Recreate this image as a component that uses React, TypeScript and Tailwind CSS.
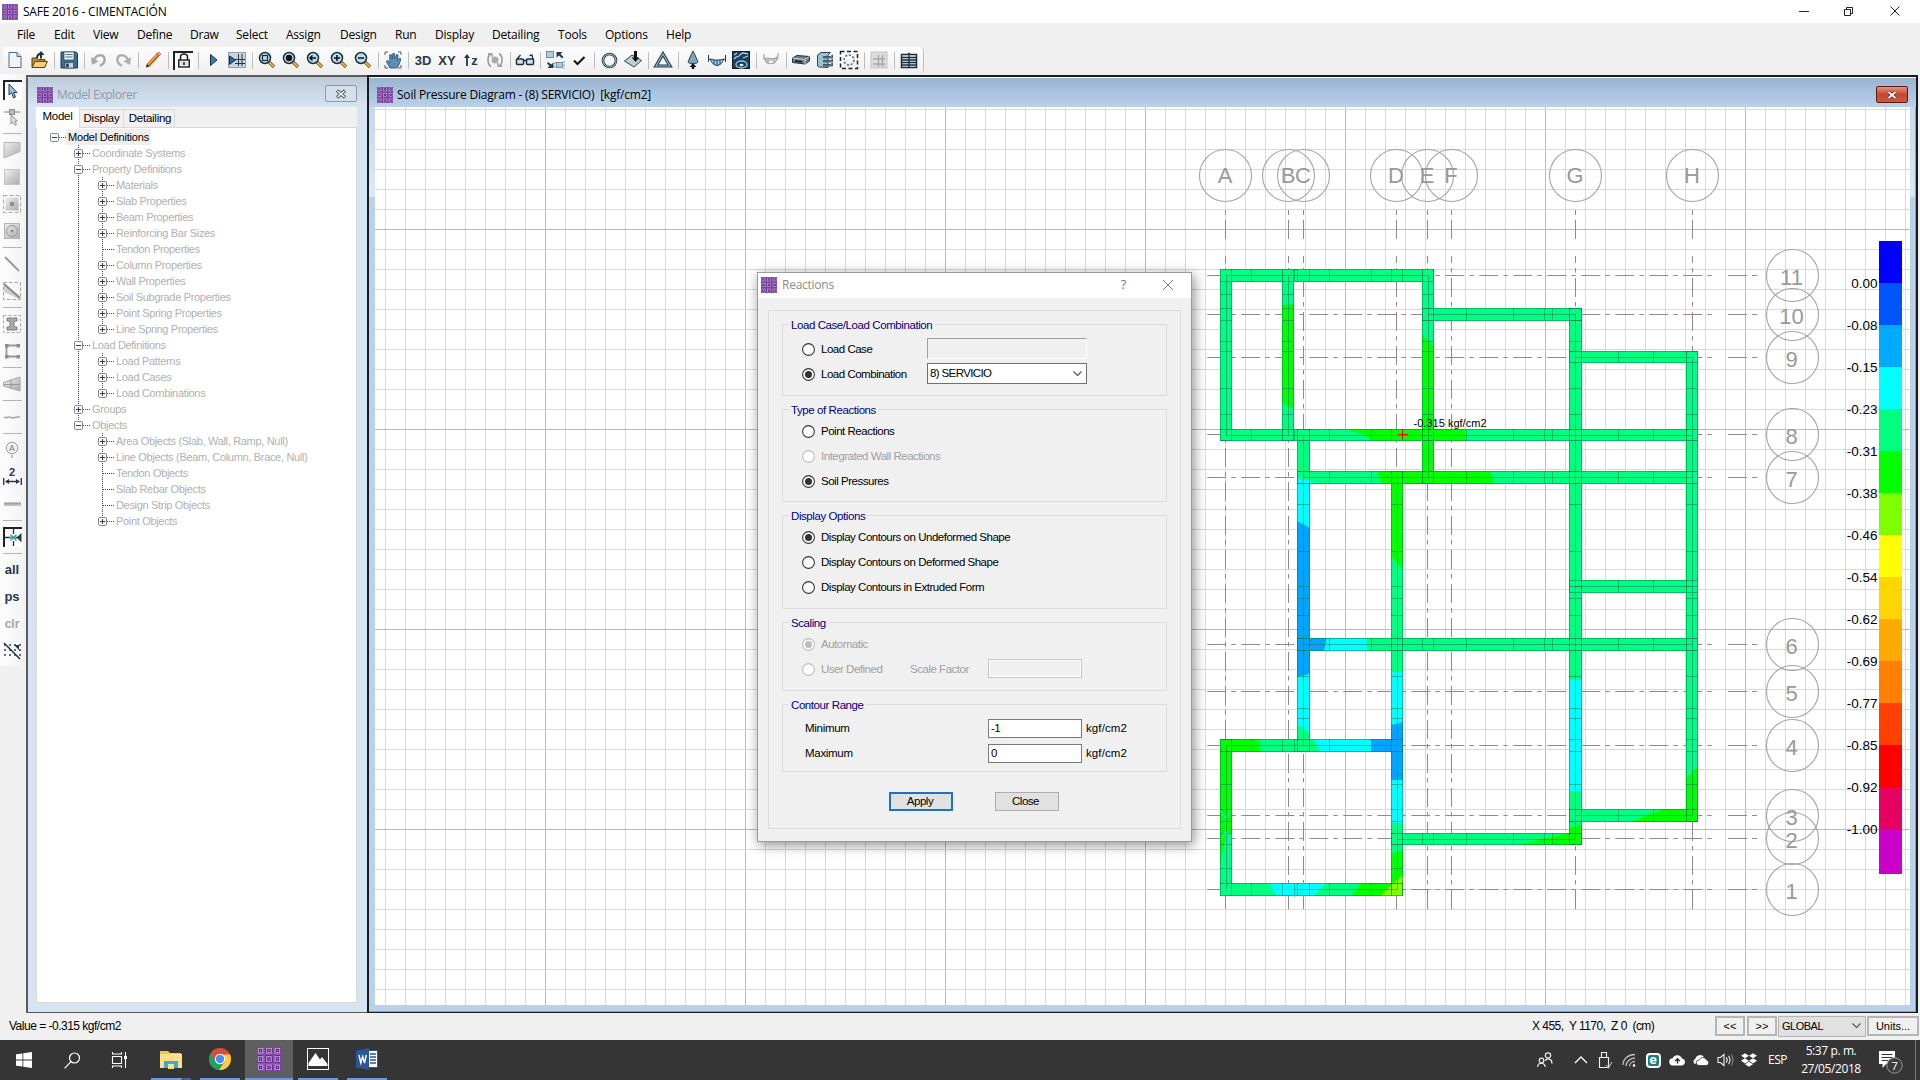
import React from "react";
import { FaDropbox } from "react-icons/fa";

const ARIAL = "font-['Liberation_Sans',Arial,sans-serif]";
const SEGOE = "font-['Open_Sans','Noto_Sans',sans-serif]";

type P = { children?: React.ReactNode };

/* ---------- shared icons ---------- */

function AppIcon({ size = 16 }: { size?: number }) {
  const cells = [0.6, 6.2, 11.8];
  return (
    <svg width={size} height={size} viewBox="0 0 16 16" className="shrink-0">
      <rect width="16" height="16" fill="#6b2c91" />
      <path d="M4.800 0v16M11.200 0v16M0 4.800h16M0 11.200h16" stroke="#8d50b3" strokeWidth="1.200" />
      {cells.map((x) =>
        cells.map((y) => (
          <g key={x + "-" + y}>
            <rect x={x + 0.3} y={y + 0.3} width="3" height="3" fill="#4c1a72" stroke="#c7a6da" strokeWidth="0.7" />
            <rect x={x + 1.3} y={y + 1.3} width="1" height="1" fill="#b48fcb" />
          </g>
        )),
      )}
    </svg>
  );
}

const S = ({ children }: P) => (
  <svg width="20" height="20" viewBox="0 0 20 20" fill="none" className="shrink-0">
    {children}
  </svg>
);

const Mag = ({ children }: P) => (
  <S>
    <path d="M11.500 11.500 L17 17" stroke="#8a5a12" strokeWidth="3.400" />
    <path d="M11.500 11.500 L16.600 16.600" stroke="#f0b040" strokeWidth="1.800" />
    <circle cx="8" cy="8" r="5.500" fill="#b5dcef" stroke="#1c2f3c" strokeWidth="1.500" />
    {children}
  </S>
);

const Word = ({ children }: P) => (
  <span className="font-['Liberation_Sans',Arial,sans-serif] text-[13px] leading-none font-bold text-[#26394a]">{children}</span>
);

/* ---------- main toolbar ---------- */

const NewDoc = () => (
  <S>
    <path d="M4 2.500h8l4 4v11H4z" fill="#eef4f7" stroke="#52697a" />
    <path d="M12 2.500v4h4" fill="#c9dbe4" stroke="#52697a" />
  </S>
);
const OpenDoc = () => (
  <S>
    <path d="M3 17V8h5l1.500 1.500H16V17z" fill="#c08a2b" stroke="#5e4210" />
    <path d="M3 17.500l3-6h12.500l-3 6z" fill="#f3cf78" stroke="#5e4210" />
    <path d="M8 8c0-3 1.500-4 4-4" stroke="#1d3447" strokeWidth="2" />
    <path d="M12 8.500V4" stroke="#1d3447" strokeWidth="2" />
    <path d="M8.500 5L12 1l3.500 4z" fill="#1d3447" />
  </S>
);
const Save = () => (
  <S>
    <path d="M2 2h15l1.500 1.500V18H2z" fill="#3d6d92" stroke="#1c3a52" />
    <rect x="5" y="2" width="10" height="8" fill="#e8eef2" stroke="#1c3a52" strokeWidth=".6" />
    <path d="M6.500 4.500h7M6.500 7h7" stroke="#54718a" />
    <rect x="6" y="12.500" width="8.500" height="5.500" fill="#c9d4dc" stroke="#1c3a52" strokeWidth=".6" />
    <rect x="7.200" y="13.500" width="2.500" height="4" fill="#1c3a52" />
  </S>
);
const Undo = () => (
  <S>
    <path d="M5 11C6 5 14 3 15.500 8.500c1 4-2 6-4.500 7.500" stroke="#a8a8a8" strokeWidth="2.400" />
    <path d="M2 7l1 8 6.500-3.500z" fill="#a8a8a8" />
  </S>
);
const Redo = () => (
  <svg width="20" height="20" viewBox="0 0 20 20" fill="none" className="-scale-x-100">
    <path d="M5 11C6 5 14 3 15.500 8.500c1 4-2 6-4.500 7.500" stroke="#b0b0b0" strokeWidth="2.400" />
    <path d="M2 7l1 8 6.500-3.500z" fill="#b0b0b0" />
  </svg>
);
const Pencil = () => (
  <S>
    <path d="M5 15.500L15.500 4" stroke="#a84f12" strokeWidth="3.600" />
    <path d="M5 15L14.500 4.500" stroke="#f7a93f" strokeWidth="1.800" />
    <path d="M14 3.500l2-1.500 2 2-1.800 1.800z" fill="#e8a8a0" stroke="#8a3a2a" strokeWidth=".5" />
    <path d="M3 17.500l.8-3.500 2.600 2.500z" fill="#2a1a0a" />
  </S>
);
const Lock = () => (
  <span className="flex h-[19px] w-5 items-center justify-center border-t-2 border-l-2 border-[#222] bg-white">
    <svg width="16" height="16" viewBox="0 0 16 16" fill="none">
      <path d="M4.500 7V4a3.500 3 0 0 1 7 0v3" stroke="#222" strokeWidth="1.600" />
      <rect x="2.700" y="7" width="10.600" height="7" fill="#dfe5e8" stroke="#222" strokeWidth="1.400" />
      <path d="M8 9v3" stroke="#222" strokeWidth="1.600" />
    </svg>
  </span>
);
const RunI = () => (
  <S>
    <path d="M7.500 4.500v11L14 10z" fill="#3a7ba8" stroke="#143049" />
  </S>
);
const RunGrid = () => (
  <S>
    <rect x="1.500" y="2.500" width="17" height="15" fill="#c9d3d9" stroke="#8fa0ab" />
    <path d="M11.500 4v12M15 4v12M8 9.500h10M8 13.500h10" stroke="#22394c" />
    <path d="M2.500 6v8.500L8.500 10z" fill="#2e6a98" stroke="#143049" />
  </S>
);
const Hand = () => (
  <S>
    <path d="M2 5V2h3M15 2h3v3M18 15v3h-3M5 18H2v-3" stroke="#555" />
    <path d="M7 18c-1-2-3.500-5-3.500-7l1.500-.5 2 2.500-.5-8 1.800-.3L9.300 9 9.800 3.500h1.700L12 9l1.500-4.500 1.600.5-.6 5.500 2-2.500 1.300.8C17 13 15.500 16 14 18z" fill="#5b8fb8" stroke="#2b4c68" strokeWidth=".8" />
  </S>
);
const ZUp = () => (
  <span className="flex items-center">
    <svg width="7" height="13" viewBox="0 0 7 13">
      <path d="M3 12V3" stroke="#26394a" strokeWidth="1.800" />
      <path d="M0 4l3-4 3 4z" fill="#26394a" />
    </svg>
    <Word>z</Word>
  </span>
);
const Rotate = () => (
  <S>
    <circle cx="10" cy="10" r="3.500" fill="#aaa" />
    <path d="M6 16.500C2 14 2 6 6 3.500M14 3.500c4 2.500 4 10.500 0 13" stroke="#999" strokeWidth="1.600" />
    <path d="M3 4h4v3M17 16h-4v-3" stroke="#999" strokeWidth="1.400" />
  </S>
);
const Glasses = () => (
  <S>
    <rect x="1.500" y="9" width="7" height="5.500" rx="1" fill="#cfe3ea" stroke="#1f2f3b" strokeWidth="1.500" />
    <rect x="11.500" y="9" width="7" height="5.500" rx="1" fill="#cfe3ea" stroke="#1f2f3b" strokeWidth="1.500" />
    <path d="M8.500 10.500h3M2 9l3.500-4M18 9l-1-4-2.500.5" stroke="#1f2f3b" strokeWidth="1.300" />
  </S>
);
const Swap = () => (
  <S>
    <rect x="1.500" y="1.500" width="7" height="6" fill="#a9cde4" stroke="#6f8ea5" />
    <rect x="11.500" y="12.500" width="6" height="5" fill="#a9cde4" stroke="#6f8ea5" />
    <path d="M11.500 2h6l-2 2 3 3-1.500 1.500-3-3-2.500 2zM8.500 18h-6l2-2L2 13.500 3.500 12l2.500 2.500 2.500-2z" fill="#22394c" />
    <path d="M10 12v7M19 11v8" stroke="#7a8a96" strokeDasharray="2 1.500" />
  </S>
);
const Check = () => (
  <S>
    <path d="M5 10.500l3.500 3.500L15.500 7" stroke="#111" strokeWidth="2" />
  </S>
);
const Ring = () => (
  <S>
    <circle cx="10.500" cy="10.500" r="6.500" stroke="#24394a" strokeWidth="2.600" />
    <circle cx="10.500" cy="10.500" r="6.500" stroke="#a9bcc8" strokeWidth="1" />
  </S>
);
const Load = () => (
  <S>
    <path d="M1.500 11L9 5l9.500 5.500L11 17z" fill="#b9cfdb" stroke="#2c4456" />
    <path d="M12.500 1v7" stroke="#111" strokeWidth="3" />
    <path d="M8.800 7.500h7.400L12.500 12z" fill="#111" />
  </S>
);
const Tri = () => (
  <S>
    <path d="M10 4L17 16H3z" stroke="#24394a" strokeWidth="3.200" />
    <path d="M10 4L17 16H3z" stroke="#8fb3c8" strokeWidth="1.200" />
  </S>
);
const Spring = () => (
  <S>
    <path d="M10 1l2 4 3 7c0 2-10 2-10 0l3-7z" fill="#7fa6b8" stroke="#2c4456" />
    <path d="M10 14v5" stroke="#111" strokeWidth="2.400" />
    <path d="M6.500 17l3.500-3.500 3.500 3.500z" fill="#111" />
  </S>
);
const Moment = () => (
  <S>
    <path d="M3.500 9c2 8.500 11 8.500 13 0-4 1.500-9 1.500-13 0z" fill="#a5d6ee" stroke="#1f3b50" />
    <path d="M1 8.500l3 1.500M19 8.500L16 10M1.500 5v7M18.500 5v7M7 10v4.500M10 10v5.500M13 10v4.500" stroke="#1f3b50" />
  </S>
);
const Contour = () => (
  <S>
    <rect x="1.500" y="1.500" width="17" height="17" fill="#1c3d5a" stroke="#10202f" />
    <path d="M3 9c3-4 4-1 6-4s4-2 8-1M3 5l3-2M12 8l5-2" stroke="#a9d0ea" strokeWidth="1.300" />
    <ellipse cx="10.500" cy="14.500" rx="5.500" ry="3.500" stroke="#8fc3e6" strokeWidth="1.500" />
    <ellipse cx="10.500" cy="15" rx="2" ry="1.300" fill="#e8f4fb" />
  </S>
);
const MomentGray = () => (
  <S>
    <path d="M3 7c2 9 11 9 14 0M3 4v5c4 2 10 2 14-3V3M7 8v6M13 8v5M3 8l14 1" stroke="#a5a5a5" strokeWidth="1.200" />
  </S>
);
const Beam = () => (
  <S>
    <path d="M1.500 8L6 5.500 18.500 6.500V11L14 14 1.500 12.500z" fill="#6f808b" stroke="#1f2d38" />
    <path d="M1.500 8L14 9.500l4.500-3M14 9.500V14" stroke="#c7d3da" />
    <path d="M4 11l7 .8" stroke="#111" strokeWidth="1.500" />
  </S>
);
const Stack = () => (
  <S>
    <path d="M2.500 5L6 2.500h9.500L13 5v12.500l-9-.5-1.500-1z" fill="#9cc0d2" stroke="#2c4456" />
    <path d="M8.500 6.500h7l2-1.500v3h-9zM8.500 10.500h7l2-1.500v3h-9zM8.500 14.500h7l2-1.500v3h-9z" fill="#6c8fa3" stroke="#2c4456" strokeWidth=".8" />
  </S>
);
const DashBox = () => (
  <S>
    <rect x="1.500" y="1.500" width="17" height="17" stroke="#222" strokeWidth="1.500" strokeDasharray="4 2.500" />
    <circle cx="10" cy="10" r="5" stroke="#4e7892" strokeWidth="1.600" strokeDasharray="2.200 1.600" />
  </S>
);
const GridGray = () => (
  <S>
    <rect x="2" y="2" width="16" height="16" fill="#dcdcdc" stroke="#c4c4c4" />
    <path d="M4 9h12M4 14h12M9.500 5v12M13.500 5v12" stroke="#a9a9a9" strokeWidth="1.500" />
  </S>
);
const Table = () => (
  <S>
    <path d="M2.500 4.500h6l1.500-1 1.500 1h6v13h-15z" fill="#e6ecef" stroke="#1c2f3c" strokeWidth="1.500" />
    <path d="M10 4v13M3 7.500h14M3 10h14M3 12.500h14M3 15h14" stroke="#1c2f3c" strokeWidth="1.400" />
  </S>
);

const TOOLS: (React.ReactNode | "|")[] = [
  <NewDoc />, <OpenDoc />, "|", <Save />, "|", <Undo />, <Redo />, "|", <Pencil />, "|", <Lock />, "|", <RunI />, <RunGrid />, "|",
  <Mag><rect x="5.500" y="5.500" width="5" height="5" stroke="#1c2f3c" strokeWidth="1.200" /></Mag>,
  <Mag><circle cx="8" cy="8" r="3.200" fill="#111" /></Mag>,
  <Mag><path d="M5 8h6M7.500 5.500L5 8l2.500 2.500" stroke="#111" strokeWidth="1.500" /></Mag>,
  <Mag><path d="M5 8h6M8 5v6" stroke="#111" strokeWidth="1.500" /></Mag>,
  <Mag><path d="M5 8h6" stroke="#111" strokeWidth="1.500" /></Mag>,
  "|", <Hand />, "|", <Word>3D</Word>, <Word>XY</Word>, <ZUp />, <Rotate />, "|", <Glasses />, "|", <Swap />, <Check />, "|",
  <Ring />, <Load />, "|", <Tri />, "|", <Spring />, <Moment />, <Contour />, "|", <MomentGray />, "|",
  <Beam />, <Stack />, <DashBox />, "|", <GridGray />, "|", <Table />,
];

function Toolbar() {
  return (
    <div className="flex h-[27px] bg-[#f0f0f0] pl-[3px]">
      <div className="flex h-[27px] w-[921px] items-center rounded-r border-r border-[#c2c2c2] bg-linear-to-b from-[#fdfdfd] to-[#efefef] pb-px">
        {TOOLS.map((t, i) =>
          t === "|" ? (
            <span key={i} className="flex w-[6px] justify-center">
              <span className="h-[17px] w-px bg-[#bdbdbd]" />
            </span>
          ) : (
            <span key={i} className="flex w-6 items-center justify-center">{t}</span>
          ),
        )}
      </div>
    </div>
  );
}

/* ---------- left tool strip ---------- */

const Pressed = ({ children }: P) => (
  <span className="flex h-5 w-[19px] items-center justify-center border-t-2 border-l-2 border-[#222] bg-white">{children}</span>
);

const SIDE: (React.ReactNode | "|")[] = [
  <Pressed>
    <svg width="12" height="16" viewBox="0 0 12 16"><path d="M2 1v11l2.600-2.300L6.500 15l2-1-2-4.500H10z" fill="#8fc7e0" stroke="#22394c" /></svg>
  </Pressed>,
  <S><path d="M2 5h16" stroke="#999" strokeWidth="1.300" /><rect x="7.500" y="2.500" width="5" height="5" fill="#bbb" stroke="#8a8a8a" /><path d="M9 8v9l2-2 2 3.500 1.500-1-1.500-3.500h2.500z" fill="#ddd" stroke="#9a9a9a" /></S>,
  "|",
  <S><path d="M2 2.500h16v9L2 18z" fill="url(#sg)" stroke="#b5b5b5" /></S>,
  <S><rect x="2.500" y="2.500" width="15" height="15" fill="url(#sg)" stroke="#c4c4c4" /></S>,
  <S><rect x="1.500" y="1.500" width="17" height="17" stroke="#aaa" strokeDasharray="4 2" /><rect x="3.500" y="3.500" width="13" height="13" fill="url(#sg)" /><circle cx="10" cy="10" r="2.200" fill="#8a8a8a" /></S>,
  <S><rect x="2.500" y="2.500" width="15" height="15" fill="url(#sg)" stroke="#b4b4b4" /><circle cx="10" cy="10" r="5.500" stroke="#999" /><circle cx="10" cy="10" r="1.500" fill="#8a8a8a" /></S>,
  "|",
  <S><path d="M3 3l14 14" stroke="#9b9b9b" strokeWidth="2" /></S>,
  <S><rect x="1.500" y="1.500" width="17" height="17" stroke="#a5a5a5" strokeDasharray="3.500 2" /><path d="M2 4v7l15 7 1-2z" fill="#d0d0d0" /><path d="M2 3l16 14" stroke="#8a8a8a" strokeWidth="2" /></S>,
  "|",
  <S><rect x="1.500" y="1.500" width="17" height="17" stroke="#a5a5a5" strokeDasharray="3 2" /><path d="M5 4h10v3h-2l-1 1v4l1 1h2v3H5v-3h2l1-1V8L7 7H5z" fill="#aaa" stroke="#7f7f7f" /></S>,
  <S><path d="M17 4.500H4.500v11H17" stroke="#999" strokeWidth="1.800" /><path d="M3 3h3.500v3.500H3zM14.500 3H18v3.500h-3.500zM3 14h3.500v3.500H3zM14.500 14H18v3.500h-3.500z" fill="#8c8c8c" /></S>,
  "|",
  <S><path d="M1.500 8.500L18 3v14L1.500 12z" fill="url(#sg)" stroke="#a5a5a5" /><path d="M2 10.500h16M9 6v9" stroke="#999" /></S>,
  "|",
  <S><path d="M2 10.500h3c3-2 4 1 6 .5s3-1.500 7-1" stroke="#a5a5a5" strokeWidth="1.500" /></S>,
  "|",
  <S><circle cx="10" cy="8" r="5.800" fill="#f0f0f0" stroke="#9a9a9a" /><path d="M7.500 11L10 5l2.500 6M8.300 9.300h3.400M10 15v3" stroke="#8a8a8a" /></S>,
  <span className="flex flex-col items-center">
    <span className="font-['Liberation_Sans',Arial,sans-serif] text-[11px] leading-[9px] font-bold text-[#26394a]">2</span>
    <svg width="19" height="9" viewBox="0 0 19 9"><path d="M.7 1v7M18.300 1v7M3 4.500h13" stroke="#26394a" strokeWidth="1.400" /><path d="M2 4.500L6 2v5zM17 4.500L13 2v5z" fill="#26394a" /></svg>
  </span>,
  <S><path d="M2 10h17" stroke="#b5b5b5" strokeWidth="3.500" /><path d="M2 9.500h17" stroke="#999" strokeDasharray="2 1" /></S>,
  "|",
  <Pressed>
    <svg width="17" height="17" viewBox="0 0 17 17"><path d="M0 8.500h12M8.500 0v5M8.500 12v5" stroke="#1f2f3b" strokeWidth="1.300" /><path d="M5.500 5.500l6 6M11.500 5.500l-6 6M4 8.500h7" stroke="#3aa7a0" strokeWidth="1.500" /><path d="M16.500 4v9.500L11.500 8.500z" fill="#26394a" /></svg>
  </Pressed>,
  "|",
  <Word>all</Word>,
  <Word>ps</Word>,
  <span className="font-['Liberation_Sans',Arial,sans-serif] text-[12px] font-bold text-[#a5a5a5]">clr</span>,
  <S><path d="M3 3v15M8 3v15M13 3v15M18 3v15" stroke="#3a4d5c" strokeWidth="1.600" strokeDasharray="2 3" /><path d="M2 2l16 16" stroke="#22394c" strokeWidth="1.600" /><path d="M12 4h5v5z" fill="#22394c" /></S>,
];

function SideTools() {
  return (
    <div className="flex w-[26px] shrink-0 flex-col bg-[#f0f0f0]">
      <div className="flex h-[592px] w-[24px] flex-col rounded-b bg-linear-to-r from-[#fdfdfd] to-[#f3f3f3] pt-[2px]">
        <svg width="0" height="0" className="absolute">
          <defs>
            <linearGradient id="sg" x1="0" y1="0" x2="1" y2="1">
              <stop offset="0" stopColor="#f0f0f0" />
              <stop offset="1" stopColor="#ababab" />
            </linearGradient>
          </defs>
        </svg>
        {SIDE.map((t, i) =>
          t === "|" ? (
            <span key={i} className="flex h-[6px] items-center justify-center">
              <span className="h-px w-[19px] bg-[#b5b5b5]" />
            </span>
          ) : (
            <span key={i} className="flex h-[27px] items-center justify-center">{t}</span>
          ),
        )}
      </div>
    </div>
  );
}

/* ---------- model explorer ---------- */

type Node = [level: number, mark: "+" | "-" | "", label: string];
const TREE: Node[] = [
  [0, "-", "Model Definitions"],
  [1, "+", "Coordinate Systems"],
  [1, "-", "Property Definitions"],
  [2, "+", "Materials"],
  [2, "+", "Slab Properties"],
  [2, "+", "Beam Properties"],
  [2, "+", "Reinforcing Bar Sizes"],
  [2, "", "Tendon Properties"],
  [2, "+", "Column Properties"],
  [2, "+", "Wall Properties"],
  [2, "+", "Soil Subgrade Properties"],
  [2, "+", "Point Spring Properties"],
  [2, "+", "Line Spring Properties"],
  [1, "-", "Load Definitions"],
  [2, "+", "Load Patterns"],
  [2, "+", "Load Cases"],
  [2, "+", "Load Combinations"],
  [1, "+", "Groups"],
  [1, "-", "Objects"],
  [2, "+", "Area Objects (Slab, Wall, Ramp, Null)"],
  [2, "+", "Line Objects (Beam, Column, Brace, Null)"],
  [2, "", "Tendon Objects"],
  [2, "", "Slab Rebar Objects"],
  [2, "", "Design Strip Objects"],
  [2, "+", "Point Objects"],
];
const LAST_L1 = 18;

function Branch({ mark, up, down }: { mark: string; up: boolean; down: boolean }) {
  return (
    <svg width="24" height="16" viewBox="0 0 24 16" className="shrink-0">
      {up && <path d="M12.500 0v8" stroke="#444" strokeDasharray="1 1" />}
      {down && <path d="M12.500 8v8" stroke="#444" strokeDasharray="1 1" />}
      <path d="M13 8.500h11" stroke="#444" strokeDasharray="1 1" />
      {mark && (
        <>
          <rect x="8.500" y="4.500" width="8" height="8" rx="1" fill="#f7f7f7" stroke="#848a94" />
          <path d={mark === "+" ? "M10 8.500h5M12.500 6v5" : "M10 8.500h5"} stroke="#2b3c78" />
        </>
      )}
    </svg>
  );
}

function Tree() {
  return (
    <div className="flex-1 border border-[#d9d9d9] bg-white pt-px pl-[5px]">
      {TREE.map(([level, mark, label], i) => {
        const next = TREE[i + 1];
        return (
          <div key={i} className="flex h-4 items-center">
            {level === 1 && <span className="w-6" />}
            {level === 2 && <span className="w-6" />}
            {level === 2 &&
              (i < LAST_L1 ? (
                <svg width="24" height="16" viewBox="0 0 24 16"><path d="M12.500 0v16" stroke="#444" strokeDasharray="1 1" /></svg>
              ) : (
                <span className="w-6" />
              ))}
            <Branch mark={mark} up={level > 0} down={level === 1 ? i < LAST_L1 : level === 2 && !!next && next[0] === 2} />
            <span
              className={
                level === 0
                  ? "h-4 bg-[#efefef] px-[2px] text-[11px] leading-4 tracking-[-0.200px] whitespace-nowrap text-black"
                  : "px-[2px] text-[11px] leading-4 tracking-[-0.320px] whitespace-nowrap text-[#b0b0b0]"
              }
            >
              {label}
            </span>
          </div>
        );
      })}
    </div>
  );
}

function Explorer() {
  return (
    <div className="flex w-[341px] shrink-0 flex-col border-t-2 border-b border-l-2 border-[#5a5a5a] bg-[#d7e4f2]">
      <div className="flex h-[30px] items-center rounded-tl bg-linear-to-b from-[#bccbdb] to-[#d7e4f2] pr-[10px] pl-[9px]">
        <span className="flex flex-1 items-center pt-[5px]">
          <AppIcon />
          <span className="ml-[4px] font-['Open_Sans','Noto_Sans',sans-serif] text-[12px] tracking-[-0.380px] text-[#8e99a5]">Model Explorer</span>
        </span>
        <span className="mt-[3px] flex h-[17px] w-8 items-center justify-center rounded-[2px] border border-[#8c9aa8] bg-[#d3dfeb]">
          <svg width="12" height="10" viewBox="0 0 12 10"><path d="M2 1.500l8 7M10 1.500l-8 7" stroke="#4a5561" strokeWidth="3.400" /><path d="M2.500 2l7 6M9.500 2l-7 6" stroke="#fff" strokeWidth="1.500" /></svg>
        </span>
      </div>
      <div className={"mr-[10px] mb-[9px] ml-[8px] flex flex-1 flex-col " + ARIAL}>
        <div className="flex h-[20px] items-end bg-[#f0f0f0] text-[11.500px] tracking-[-0.250px] text-black">
          <span className="flex h-[21px] w-[44px] translate-y-px items-center justify-center border-r border-[#d9d9d9] bg-white pb-[2px]">Model</span>
          <span className="flex h-[18px] w-[44px] items-center justify-center border-t border-r border-[#d9d9d9] pt-px">Display</span>
          <span className="flex h-[18px] w-[51px] items-center justify-center border-t border-r border-[#d9d9d9] pt-px pl-[2px]">Detailing</span>
        </div>
        <Tree />
      </div>
    </div>
  );
}

/* ---------- soil pressure plan ---------- */

const SPRING = "#00ff80";
const GREEN = "#00ff00";
const CYAN = "#00ffff";
const BLUE = "#00a5ff";

const COLS: [string, number][] = [["A", 1225.5], ["B", 1288.5], ["C", 1303.5], ["D", 1396.5], ["E", 1427.5], ["F", 1451.5], ["G", 1575.5], ["H", 1692.5]];
const ROWS: [string, number][] = [["11", 275.5], ["10", 314.5], ["9", 357.5], ["8", 434.5], ["7", 477.5], ["6", 644.5], ["5", 691.5], ["4", 745.5], ["3", 815.5], ["2", 838.5], ["1", 889.5]];

/* x1, y1, x2, y2 */
const V_BEAMS = [
  [1220, 269, 1232, 441], [1282, 269, 1294, 441], [1422, 269, 1434, 484], [1569, 308, 1582, 845], [1686, 351, 1698, 822],
  [1297, 429, 1310, 752], [1391, 471, 1403, 896], [1220, 739, 1232, 896],
];
const H_BEAMS = [
  [1220, 269, 1434, 282], [1422, 308, 1582, 321], [1569, 351, 1698, 363], [1220, 429, 1698, 441], [1297, 471, 1698, 484],
  [1569, 580, 1698, 593], [1297, 638, 1698, 651], [1220, 739, 1403, 752], [1220, 883, 1403, 896], [1391, 833, 1582, 845], [1569, 809, 1698, 822],
];
const PATCHES: [string, string][] = [
  [GREEN, "1282,305 1294,304 1294,409 1282,403"],
  [GREEN, "1422,335 1434,346 1434,484 1422,484"],
  [GREEN, "1345,429 1464,429 1466,436 1466,441 1374,441 1363,434"],
  [GREEN, "1377,471 1490,471 1494,484 1382,484"],
  [CYAN, "1297,478 1310,480 1310,528 1297,521"],
  [CYAN, "1309,480 1315,484 1309,484"],
  [BLUE, "1297,521 1310,528 1310,674 1297,677"],
  [CYAN, "1297,677 1310,674 1310,733 1297,725"],
  [BLUE, "1309,638 1327,638 1324,651 1309,651"],
  [CYAN, "1327,638 1366,638 1368,651 1324,651"],
  [GREEN, "1391,484 1403,484 1403,569 1391,556"],
  [CYAN, "1391,672 1403,672 1403,722 1391,725"],
  [GREEN, "1220,739 1258,739 1261,752 1220,752"],
  [CYAN, "1314,739 1371,739 1371,752 1320,752"],
  [BLUE, "1371,739 1391,739 1391,725 1403,722 1403,780 1391,780 1391,752 1371,752"],
  [CYAN, "1391,780 1403,780 1403,823 1391,823"],
  [GREEN, "1391,854 1403,850 1403,896 1391,896"],
  [GREEN, "1220,752 1232,752 1232,832 1226,836 1220,864"],
  [CYAN, "1269,883 1326,883 1313,896 1276,896"],
  [GREEN, "1361,883 1403,883 1403,896 1352,896"],
  ["#80ff00", "1403,875 1403,896 1381,896 1389,886"],
  [CYAN, "1569,679 1582,679 1582,791 1569,791"],
  [GREEN, "1569,828 1582,825 1582,845 1517,845 1569,833"],
  [GREEN, "1686,779 1698,766 1698,822 1631,822 1662,809 1686,809"],
];
const XT = [1251.5, 1282.5, 1294.5, 1297.5, 1309.5, 1329.5, 1371.5, 1391.5, 1402.5, 1422.5, 1433.5, 1466.5, 1513.5, 1544.5, 1552.5, 1569.5, 1581.5, 1618.5, 1653.5, 1686.5];
const YT = [294.5, 308.5, 320.5, 341.5, 351.5, 388.5, 414.5, 429.5, 440.5, 471.5, 483.5, 504.5, 551.5, 586.5, 598.5, 615.5, 638.5, 650.5, 676.5, 708.5, 718.5, 739.5, 751.5, 784.5, 809.5, 821.5, 833.5, 844.5, 868.5, 883.5];

const LEGEND: [string, string][] = [
  ["#0000ff", "0.00"], ["#0055ff", "-0.08"], ["#00aaff", "-0.15"], ["#00ffff", "-0.23"], ["#00ff80", "-0.31"], ["#00ff00", "-0.38"],
  ["#80ff00", "-0.46"], ["#ffff00", "-0.54"], ["#ffd500", "-0.62"], ["#ffaa00", "-0.69"], ["#ff8000", "-0.77"], ["#ff4000", "-0.85"],
  ["#ff0000", "-0.92"], ["#e6005f", "-1.00"], ["#c800c8", ""],
];

const range = (from: number, to: number, step: number) => {
  const out: number[] = [];
  for (let v = from; v <= to; v += step) out.push(v);
  return out;
};

function GridLines() {
  return (
    <g stroke="#8f8a88" fill="none">
      {COLS.map(([n, x]) => (
        <g key={n}>
          <path d={`M${x} 210v5M${x} 220v19`} />
          <path d={`M${x} 256V909`} strokeDasharray="19 5 4.500 5.500" strokeDashoffset="12" />
        </g>
      ))}
      {ROWS.map(([n, y]) => (
        <g key={n}>
          <path d={`M1206.500 ${y}H1712`} strokeDasharray="19 5 4.500 5.500" strokeDashoffset="33.200" />
          <path d={`M1728 ${y}h19M1752 ${y}h5`} />
        </g>
      ))}
    </g>
  );
}

function Plan() {
  return (
    <svg width="1535" height="898" viewBox="375 107 1535 898" className="block bg-white" fontFamily="Liberation Sans, Arial, sans-serif">
      {range(385, 1905, 20).map((x) => (
        <path key={x} d={`M${x + 0.5} 107V1005`} stroke={(x - 345) % 200 === 0 ? "#93c3e8" : "#c6def2"} />
      ))}
      {range(109, 989, 20).map((y) => (
        <path key={y} d={`M375 ${y + 0.5}H1910`} stroke={(y - 229) % 200 === 0 ? "#93c3e8" : "#c6def2"} />
      ))}
      <GridLines />
      <g fill={SPRING}>
        {[...V_BEAMS, ...H_BEAMS].map(([a, b, c, d], i) => (
          <rect key={i} x={a} y={b} width={c - a} height={d - b} />
        ))}
      </g>
      {PATCHES.map(([c, p], i) => (
        <polygon key={i} points={p} fill={c} />
      ))}
      <g stroke="#007a4a" strokeOpacity="0.5" fill="none">
        {V_BEAMS.map(([a, b, c, d], i) => (
          <g key={i}>
            <path d={`M${a + 0.5} ${b}V${d}M${c - 0.5} ${b}V${d}`} />
            {YT.filter((y) => y > b && y < d).map((y) => (
              <path key={y} d={`M${a} ${y}H${c}`} />
            ))}
          </g>
        ))}
        {H_BEAMS.map(([a, b, c, d], i) => (
          <g key={i}>
            <path d={`M${a} ${b + 0.5}H${c}M${a} ${d - 0.5}H${c}`} />
            {XT.filter((x) => x > a && x < c).map((x) => (
              <path key={x} d={`M${x} ${b}V${d}`} />
            ))}
          </g>
        ))}
      </g>
      <g stroke="#2f7070" strokeOpacity="0.55">
        {V_BEAMS.map(([a, b, , d], i) => (
          <path key={i} d={`M${a + 6.5} ${b + 6}V${d - 6}`} />
        ))}
        {H_BEAMS.map(([a, b, c], i) => (
          <path key={i} d={`M${a + 6} ${b + 6.5}H${c - 6}`} />
        ))}
      </g>
      <g stroke="#00f0e0" fill="none">
        <path d="M1225.500 889V832M1221 840l4.500-9 4.500 9M1220 811l5.500 7 5.500-7M1225.500 818v6M1226 889.500h68M1294 897l10-14M1294 884l10 13" />
      </g>
      <g fill="none" stroke="#a3a3a3" strokeWidth="1.100">
        {COLS.map(([n, x]) => <circle key={n} cx={x} cy="175.500" r="26" />)}
        {ROWS.map(([n, y]) => <circle key={n} cx="1792.500" cy={y} r="26" />)}
      </g>
      <g fill="#999" fontSize="22" textAnchor="middle">
        {COLS.map(([n, x]) => <text key={n} x={x - 0.5} y="183">{n}</text>)}
        {ROWS.map(([n, y]) => <text key={n} x="1791.500" y={y + 9}>{n}</text>)}
      </g>
      <text x="1413.500" y="427" fontSize="11" textLength="73">-0.315 kgf/cm2</text>
      <path d="M1398 434.500h10M1402.500 429v11" stroke="#f00" />
      {LEGEND.map(([c, t], i) => (
        <g key={c}>
          <rect x="1879" y={241 + 42 * i} width="23" height={i === 14 ? 45 : 42} fill={c} />
          {t && <text x="1877.500" y={288 + 42 * i} fontSize="13.500" textAnchor="end">{t}</text>}
        </g>
      ))}
    </svg>
  );
}

function PlanWindow() {
  return (
    <div className="flex w-[1551px] shrink-0 flex-col border-2 border-b-[1px] border-[#1a1a1a] bg-[#b9d1ea]">
      <div className="flex h-[30px] items-center border-t border-white bg-linear-to-b from-[#9ab4d1] to-[#b9d1ea] pr-[8px] pl-[8px]">
        <span className="flex flex-1 items-center pt-[5px]">
          <AppIcon />
          <span className="ml-[4px] font-['Open_Sans','Noto_Sans',sans-serif] text-[12px] tracking-[-0.210px] whitespace-pre text-black">{"Soil Pressure Diagram - (8) SERVICIO)  [kgf/cm2]"}</span>
        </span>
        <span className="mt-[4px] flex h-[17px] w-8 items-center justify-center rounded-[2px] border border-[#5c1a12] bg-linear-to-b from-[#e0937f] via-[#c9452b] to-[#c75a3f]">
          <svg width="12" height="10" viewBox="0 0 12 10"><path d="M2.500 2l7 6M9.500 2l-7 6" stroke="#5a2018" strokeWidth="3.200" /><path d="M2.500 2l7 6M9.500 2l-7 6" stroke="#fff" strokeWidth="1.800" /></svg>
        </span>
      </div>
      <div className="flex flex-1 border-b border-[#35c3e0] bg-[#b9d1ea]">
        <div className="w-[6px] bg-linear-to-b from-[#c4d8ee] from-0% via-[#dbe8f6] via-10% to-[#b9d1ea] to-[10%]" />
        <Plan />
        <div className="w-[6px] border-r border-[#35c3e0] bg-linear-to-b from-[#c4d8ee] from-0% via-[#dbe8f6] via-10% to-[#b9d1ea] to-[10%]" />
      </div>
    </div>
  );
}

/* ---------- reactions dialog ---------- */

function Radio({ label, on, off }: { label: string; on?: boolean; off?: boolean }) {
  return (
    <span className={off ? "flex h-[25px] items-center text-[#a0a0a0]" : "flex h-[25px] items-center text-black"}>
      <svg width="13" height="13" viewBox="0 0 13 13" className="mr-[6px] shrink-0">
        <circle cx="6.500" cy="6.500" r="5.900" fill="#fff" stroke={off ? "#bcbcbc" : "#333"} strokeWidth="1.100" />
        {on && <circle cx="6.500" cy="6.500" r="3.500" fill={off ? "#bcbcbc" : "#333"} />}
      </svg>
      <span className="pt-px">{label}</span>
    </span>
  );
}

function Group({ title, className, children }: P & { title: string; className: string }) {
  return (
    <fieldset className={"relative flex flex-col border border-[#dcdcdc] pl-[19px] " + className}>
      <span className="absolute -top-[7px] left-[6px] bg-[#f0f0f0] px-[2px] leading-[15px] tracking-[-0.420px] text-[#00007f]">{title}</span>
      {children}
    </fieldset>
  );
}

function Dialog() {
  return (
    <div className={"absolute top-[272px] left-[757px] flex h-[570px] w-[435px] flex-col border border-[#9a9a9a] bg-[#f0f0f0] text-[11.500px] tracking-[-0.480px] whitespace-nowrap text-black shadow-[2px_3px_12px_rgba(0,0,0,0.45)] " + ARIAL}>
      <div className="flex h-[25px] items-center bg-white pr-[17px] pb-px pl-[3px]">
        <AppIcon />
        <span className="ml-[5px] flex-1 font-['Open_Sans','Noto_Sans',sans-serif] text-[12px] tracking-[-0.250px] text-[#8d8d8d]">Reactions</span>
        <span className="mr-[36px] font-['Open_Sans','Noto_Sans',sans-serif] text-[13px] text-[#777]">?</span>
        <svg width="12" height="12" viewBox="0 0 12 12"><path d="M1 1l10 10M11 1L1 11" stroke="#777" /></svg>
      </div>
      <div className="mx-[10px] mt-[12px] mb-[12px] flex flex-1 flex-col border border-[#dcdcdc] px-[13px] pt-[13px]">
        <Group title="Load Case/Load Combination" className="h-[72px] pt-[12px]">
          <div className="flex">
            <div className="flex w-[125px] flex-col">
              <Radio label="Load Case" />
              <Radio label="Load Combination" on />
            </div>
            <div className="flex flex-col pt-[1px]">
              <span className="h-[21px] w-[160px] border border-t-[#a0a0a0] border-r-white border-b-white border-l-[#a0a0a0]" />
              <span className="mt-[4px] flex h-[21px] w-[160px] items-center justify-between border border-[#707070] bg-white pr-[4px] pl-[2px] tracking-[-0.620px]">
                8) SERVICIO
                <svg width="9" height="6" viewBox="0 0 9 6"><path d="M.5.500l4 4 4-4" fill="none" stroke="#555" strokeWidth="1.200" /></svg>
              </span>
            </div>
          </div>
        </Group>
        <Group title="Type of Reactions" className="mt-[13px] h-[93px] pt-[9px]">
          <Radio label="Point Reactions" />
          <Radio label="Integrated Wall Reactions" off />
          <Radio label="Soil Pressures" on />
        </Group>
        <Group title="Display Options" className="mt-[13px] h-[94px] pt-[9px]">
          <Radio label="Display Contours on Undeformed Shape" on />
          <Radio label="Display Contours on Deformed Shape" />
          <Radio label="Display Contours in Extruded Form" />
        </Group>
        <Group title="Scaling" className="mt-[13px] h-[69px] pt-[9px]">
          <Radio label="Automatic" on off />
          <div className="flex items-center text-[#a0a0a0]">
            <div className="w-[108px]"><Radio label="User Defined" off /></div>
            <span className="w-[78px] pt-px">Scale Factor</span>
            <span className="-mt-[3px] h-[19px] w-[94px] border border-[#c6c6c6] bg-[#f0f0f0] shadow-[inset_0_0_0_1px_#fff]" />
          </div>
        </Group>
        <Group title="Contour Range" className="mt-[13px] h-[68px] pt-[11px]">
          {[["Minimum", "-1"], ["Maximum", "0"]].map(([k, v]) => (
            <div key={k} className="flex h-[25px] items-center">
              <span className="w-[186px] pl-[3px] tracking-[-0.300px]">{k}</span>
              <span className="mr-[4px] flex h-[19px] w-[94px] items-center border border-[#7a7a7a] bg-white pl-[2px]">{v}</span>
              <span className="tracking-[0.100px]">kgf/cm2</span>
            </div>
          ))}
        </Group>
        <div className="mt-[20px] flex gap-[42px] pl-[107px]">
          <span className="flex h-[19px] w-[64px] items-center justify-center border-2 border-[#1b74bd] bg-[#e1e1e1] pr-[2px]">Apply</span>
          <span className="flex h-[19px] w-[64px] items-center justify-center border border-[#adadad] bg-[#e1e1e1] pr-[3px]">Close</span>
        </div>
      </div>
    </div>
  );
}

/* ---------- bottom bars ---------- */

function StatusBar() {
  return (
    <div className={"flex h-[27px] items-center bg-[#f0f0f0] pr-[1px] pb-px pl-[9px] text-[12px] whitespace-pre text-black " + ARIAL}>
      <span className="w-[1523px] tracking-[-0.500px]">Value = -0.315 kgf/cm2</span>
      <span className="w-[183px] tracking-[-0.530px]">{"X 455,  Y 1170,  Z 0  (cm)"}</span>
      <span className="mr-[2px] flex h-5 w-[30px] items-center justify-center border-2 border-[#b5b5b5] bg-[#f0f0f0] text-[11px]">&lt;&lt;</span>
      <span className="mr-px flex h-5 w-[30px] items-center justify-center border-2 border-[#b5b5b5] bg-[#f0f0f0] text-[11px]">&gt;&gt;</span>
      <span className="mr-px flex h-[21px] w-[88px] items-center justify-between border border-[#b5b5b5] bg-[#e1e1e1] pr-[4px] pl-[3px] text-[11px] tracking-[-0.500px]">
        GLOBAL
        <svg width="9" height="6" viewBox="0 0 9 6"><path d="M.5.500l4 4 4-4" fill="none" stroke="#555" strokeWidth="1.100" /></svg>
      </span>
      <span className="flex h-5 w-[52px] items-center justify-center border-2 border-[#b5b5b5] bg-[#f0f0f0] text-[11px]">Units...</span>
    </div>
  );
}

const PinnedBar = ({ children, w, active }: P & { w: string; active?: boolean }) => (
  <span className={(active ? "bg-[#5f5f5f] " : "") + w + " flex h-10 flex-col items-center"}>
    <span className="flex h-[38px] items-center justify-center">{children}</span>
    <span className="h-[2px] w-full bg-[#6f98d8]" />
  </span>
);

const Tray = ({ children }: P) => <span className="flex w-6 items-center justify-center">{children}</span>;

function Taskbar() {
  return (
    <div className={"flex h-10 items-center bg-[#353535] text-white " + SEGOE}>
      <span className="flex w-12 justify-center">
        <svg width="16" height="16" viewBox="0 0 16 16" fill="#fff"><path d="M0 2.300l6.500-.9v6.200H0zM7.300 1.300L16 0v7.600H7.300zM0 8.400h6.500v6.200L0 13.700zM7.300 8.400H16V16l-8.700-1.300z" /></svg>
      </span>
      <span className="flex w-12 justify-center">
        <svg width="17" height="17" viewBox="0 0 17 17" fill="none" stroke="#fff" strokeWidth="1.200"><circle cx="10.500" cy="6" r="5" /><path d="M7 9.700L.6 16.300" /></svg>
      </span>
      <span className="flex w-12 justify-center">
        <svg width="18" height="16" viewBox="0 0 18 16" fill="none" stroke="#fff" strokeWidth="1.100"><path d="M1.500 4.500h9v7h-9zM1.500 0v2h9V0M1.500 16v-2h9v2M14.500 0v16" /><path d="M13 4h3v3h-3z" fill="#fff" stroke="none" /></svg>
      </span>
      <span className="ml-[7px] flex h-10 flex-col">
        <span className="flex h-[38px] w-[40px] items-center justify-center">
          <svg width="22" height="19" viewBox="0 0 22 19"><path d="M0 1h8l2 2h11v15H0z" fill="#f5c84c" /><path d="M0 4h22v14H0z" fill="#ffe08a" /><path d="M4 11h14v7H4z" fill="#3fa9d6" /><path d="M8 14h6v5H8z" fill="#ffe08a" /></svg>
        </span>
        <span className="flex gap-px"><span className="h-[2px] w-[31px] bg-[#6f98d8]" /><span className="h-[2px] w-[8px] bg-[#4a6591]" /></span>
      </span>
      <span className="ml-[9px]" />
      <PinnedBar w="w-[40px]">
        <svg width="22" height="22" viewBox="0 0 22 22">
          <circle cx="11" cy="11" r="11" fill="#dd4b3e" />
          <path d="M1.500 5.500A11 11 0 0 0 10 22l5.300-8.500H6.700z" fill="#1da462" />
          <path d="M10 22A11 11 0 0 0 21 6.500H11l4.800 7z" fill="#ffce44" />
          <circle cx="11" cy="11" r="5.200" fill="#fff" /><circle cx="11" cy="11" r="4.200" fill="#4a8af4" />
        </svg>
      </PinnedBar>
      <span className="ml-[5px]" />
      <PinnedBar w="w-[48px]" active><AppIcon size={24} /></PinnedBar>
      <span className="ml-[5px]" />
      <PinnedBar w="w-[40px]">
        <svg width="22" height="22" viewBox="0 0 22 22"><rect x=".5" y=".5" width="21" height="21" fill="#353535" stroke="#fff" /><path d="M1.500 18V15L8.500 5l4.500 6.500 2-2.500 5.500 7v2z" fill="#fff" /></svg>
      </PinnedBar>
      <span className="ml-[9px]" />
      <PinnedBar w="w-[40px]">
        <svg width="22" height="22" viewBox="0 0 22 22"><rect x="11" y="2.500" width="10.500" height="17" fill="#fff" stroke="#2b5797" /><path d="M14 6h6M14 9h6M14 12h6M14 15h6" stroke="#2b5797" strokeWidth="1.300" /><path d="M0 2.500L13 0v22L0 19.500z" fill="#2b5797" /><path d="M3 7l1.800 8L6.700 8.500 8.500 15l1.800-8" fill="none" stroke="#fff" strokeWidth="1.400" /></svg>
      </PinnedBar>
      <span className="flex-1" />
      <span className="mr-[12px] flex w-6 justify-center">
        <svg width="16" height="16" viewBox="0 0 16 16" fill="none" stroke="#eee" strokeWidth="1.200"><circle cx="11" cy="3.500" r="2.700" /><circle cx="4.500" cy="8.500" r="2.300" /><path d="M.7 15c0-5 7.500-5 7.500 0M8 8.800c2.500-3.500 7-2 7 2.700" /></svg>
      </span>
      <Tray><svg width="14" height="8" viewBox="0 0 14 8"><path d="M1 7l6-6 6 6" fill="none" stroke="#fff" strokeWidth="1.300" /></svg></Tray>
      <Tray><svg width="14" height="17" viewBox="0 0 14 17" fill="none" stroke="#eee" strokeWidth="1.100"><path d="M3.500 5.500v-5h5v5M1.500 5.500h9v10h-9z" /><path d="M8 13l2.500 3L14 10" stroke="#bbb" /></svg></Tray>
      <Tray><svg width="14" height="14" viewBox="0 0 14 14" fill="none" stroke="#bbb" strokeWidth="1.300"><path d="M1 12C1 6 6 1.500 13 1.500M4 13c0-4 4-8 9-8M7.500 13.500c0-3 2.500-5 5.500-5" /><circle cx="12" cy="12.500" r="1.300" fill="#fff" stroke="none" /></svg></Tray>
      <Tray><span className="flex h-[15px] w-[15px] items-center justify-center rounded-[4px] border-2 border-white bg-[#17807c] pb-[2px] text-[13px] leading-none font-bold">e</span></Tray>
      <Tray><svg width="17" height="12" viewBox="0 0 17 12"><path d="M4 11.500a3.600 3.600 0 0 1-.3-7.200A5 5 0 0 1 13 4.600a3.500 3.500 0 0 1 0 6.900z" fill="#fff" /><path d="M8.500 9.500v-4M6.200 7l2.300-2.300L10.800 7" stroke="#353535" strokeWidth="1.500" fill="none" /></svg></Tray>
      <Tray><svg width="17" height="12" viewBox="0 0 17 12"><path d="M2 10a2.700 2.700 0 0 1 .2-5A5 5 0 0 1 11 3" fill="#fff" /><path d="M6 11.500a2.800 2.800 0 0 1 .2-5.600 4 4 0 0 1 7.300 0 2.900 2.900 0 0 1 .3 5.600z" fill="#fff" stroke="#353535" strokeWidth=".8" /></svg></Tray>
      <Tray><svg width="17" height="14" viewBox="0 0 17 14" fill="none" stroke="#eee" strokeWidth="1.100"><path d="M1 4.500h2.500L7 1.500v11L3.500 9.500H1z" /><path d="M9 4.500c1.500 1.500 1.500 3.500 0 5M11.500 3c2 2 2 6 0 8" /><path d="M14 1.500c2.500 3 2.500 8 0 11" stroke="#888" /></svg></Tray>
      <Tray><FaDropbox size={16} color="#fff" /></Tray>
      <span className="flex w-[33px] items-center justify-center text-[12px] tracking-[-0.500px]">ESP</span>
      <span className="flex w-[74px] flex-col items-center text-[12px] leading-[18px] tracking-[-0.400px] whitespace-nowrap">
        <span>5:37 p. m.</span>
        <span>27/05/2018</span>
      </span>
      <span className="mr-[10px] ml-[9px] flex w-[28px] justify-center pt-[3px]">
        <svg width="26" height="26" viewBox="0 0 26 26">
          <path d="M1 2h16v13h-9l-3.500 4v-4H1z" fill="#fff" />
          <path d="M3.500 5.500h11M3.500 8.500h11M3.500 11.500h7" stroke="#353535" />
          <circle cx="16.500" cy="16.500" r="7.700" fill="#3c3c3c" stroke="#9a9a9a" />
          <text x="16.500" y="20.500" fontSize="11.500" fill="#fff" textAnchor="middle" fontFamily="Open Sans, sans-serif">7</text>
        </svg>
      </span>
      <span className="mr-[4px] h-10 w-px bg-[#777]" />
    </div>
  );
}

/* ---------- page ---------- */

const MENU: [string, string][] = [
  ["File", "w-[37px]"], ["Edit", "w-[39px]"], ["View", "w-[44px]"], ["Define", "w-[53px]"], ["Draw", "w-[46px]"], ["Select", "w-[50px]"], ["Assign", "w-[54px]"],
  ["Design", "w-[55px]"], ["Run", "w-[40px]"], ["Display", "w-[57px]"], ["Detailing", "w-[66px]"], ["Tools", "w-[47px]"], ["Options", "w-[61px]"], ["Help", "w-[40px]"],
];

export default function App() {
  return (
    <div className="relative flex h-[1080px] w-[1920px] flex-col overflow-hidden bg-[#f0f0f0]">
      <div className={"flex h-[23px] items-center bg-white pr-[19px] pl-[2px] text-[12px] text-black " + SEGOE}>
        <AppIcon />
        <span className="ml-[5px] flex-1 tracking-[-0.220px]">SAFE 2016 - CIMENTACIÓN</span>
        <svg width="102" height="12" viewBox="0 0 102 12" fill="none" stroke="#222">
          <path d="M0 5.500h10" />
          <path d="M45.500 3.500h6v6h-6zM47.500 3.500v-2h6v6h-2M91.500.500l9 9M100.500.500l-9 9" />
        </svg>
      </div>
      <div className={"flex h-[24px] items-center pl-[17px] text-[12px] text-black " + SEGOE}>
        {MENU.map(([m, w]) => (
          <span key={m} className={w + " tracking-[-0.220px]"}>{m}</span>
        ))}
      </div>
      <Toolbar />
      <div className="flex h-[939px]">
        <SideTools />
        <div className="flex flex-1 pt-px">
          <Explorer />
          <PlanWindow />
        </div>
      </div>
      <StatusBar />
      <Taskbar />
      <Dialog />
    </div>
  );
}
